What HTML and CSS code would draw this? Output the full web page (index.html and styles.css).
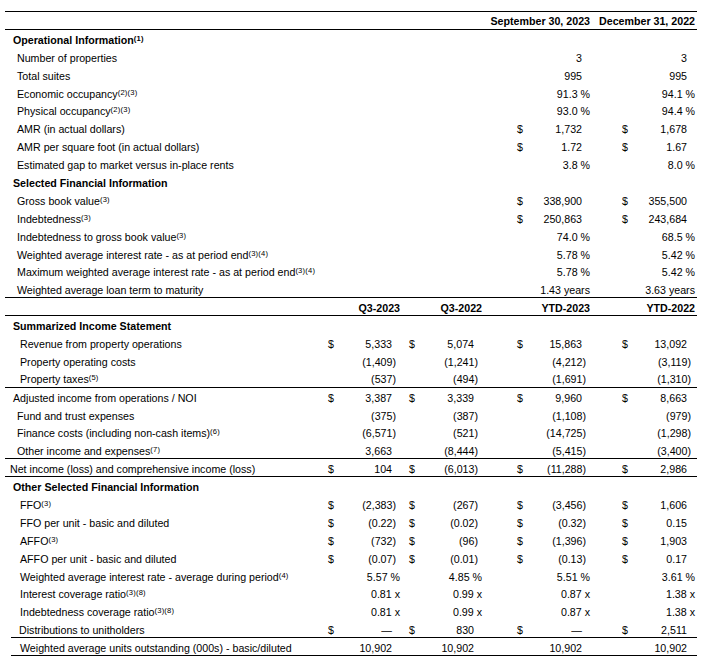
FILE: index.html
```html
<!DOCTYPE html>
<html lang="en">
<head>
<meta charset="utf-8">
<title>Financial Highlights</title>
<link rel="stylesheet" href="styles.css">
</head>
<body>
<div class="sheet">
  <div class="row ul">
    <div class="lbl"></div>
    <div class="v c3 h"><span class="num">September 30, 2023</span></div>
    <div class="v c4 h"><span class="num">December 31, 2022</span></div>
  </div>
  <div class="row"><div class="lbl sec">Operational Information<sup>(1)</sup></div></div>
  <div class="row"><div class="lbl i1">Number of properties</div>
    <div class="v c3"><span class="num pos">3</span></div><div class="v c4"><span class="num pos">3</span></div></div>
  <div class="row"><div class="lbl i1">Total suites</div>
    <div class="v c3"><span class="num pos">995</span></div><div class="v c4"><span class="num pos">995</span></div></div>
  <div class="row"><div class="lbl i1">Economic occupancy<sup>(2)(3)</sup></div>
    <div class="v c3"><span class="num pct">91.3 %</span></div><div class="v c4"><span class="num pct">94.1 %</span></div></div>
  <div class="row"><div class="lbl i1">Physical occupancy<sup>(2)(3)</sup></div>
    <div class="v c3"><span class="num pct">93.0 %</span></div><div class="v c4"><span class="num pct">94.4 %</span></div></div>
  <div class="row"><div class="lbl i1">AMR (in actual dollars)</div>
    <div class="v c3"><span class="cur">$</span><span class="num pos">1,732</span></div><div class="v c4"><span class="cur">$</span><span class="num pos">1,678</span></div></div>
  <div class="row"><div class="lbl i1">AMR per square foot (in actual dollars)</div>
    <div class="v c3"><span class="cur">$</span><span class="num pos">1.72</span></div><div class="v c4"><span class="cur">$</span><span class="num pos">1.67</span></div></div>
  <div class="row"><div class="lbl i1">Estimated gap to market versus in-place rents</div>
    <div class="v c3"><span class="num pct">3.8 %</span></div><div class="v c4"><span class="num pct">8.0 %</span></div></div>
  <div class="row"><div class="lbl sec">Selected Financial Information</div></div>
  <div class="row"><div class="lbl i1">Gross book value<sup>(3)</sup></div>
    <div class="v c3"><span class="cur">$</span><span class="num pos">338,900</span></div><div class="v c4"><span class="cur">$</span><span class="num pos">355,500</span></div></div>
  <div class="row"><div class="lbl i1">Indebtedness<sup>(3)</sup></div>
    <div class="v c3"><span class="cur">$</span><span class="num pos">250,863</span></div><div class="v c4"><span class="cur">$</span><span class="num pos">243,684</span></div></div>
  <div class="row"><div class="lbl i1">Indebtedness to gross book value<sup>(3)</sup></div>
    <div class="v c3"><span class="num pct">74.0 %</span></div><div class="v c4"><span class="num pct">68.5 %</span></div></div>
  <div class="row"><div class="lbl i1">Weighted average interest rate - as at period end<sup>(3)(4)</sup></div>
    <div class="v c3"><span class="num pct">5.78 %</span></div><div class="v c4"><span class="num pct">5.42 %</span></div></div>
  <div class="row"><div class="lbl i1">Maximum weighted average interest rate - as at period end<sup>(3)(4)</sup></div>
    <div class="v c3"><span class="num pct">5.78 %</span></div><div class="v c4"><span class="num pct">5.42 %</span></div></div>
  <div class="row ul"><div class="lbl i1">Weighted average loan term to maturity</div>
    <div class="v c3"><span class="num pct">1.43 years</span></div><div class="v c4"><span class="num pct">3.63 years</span></div></div>

  <div class="row ul"><div class="lbl"></div>
    <div class="v c1 h"><span class="num">Q3-2023</span></div>
    <div class="v c2 h"><span class="num">Q3-2022</span></div>
    <div class="v c3 h"><span class="num">YTD-2023</span></div>
    <div class="v c4 h"><span class="num">YTD-2022</span></div>
  </div>
  <div class="row"><div class="lbl sec">Summarized Income Statement</div></div>
  <div class="row"><div class="lbl i2">Revenue from property operations</div>
    <div class="v c1"><span class="cur">$</span><span class="num pos">5,333</span></div>
    <div class="v c2"><span class="cur">$</span><span class="num pos">5,074</span></div>
    <div class="v c3"><span class="cur">$</span><span class="num pos">15,863</span></div>
    <div class="v c4"><span class="cur">$</span><span class="num pos">13,092</span></div></div>
  <div class="row"><div class="lbl i2">Property operating costs</div>
    <div class="v c1"><span class="num neg">(1,409)</span></div>
    <div class="v c2"><span class="num neg">(1,241)</span></div>
    <div class="v c3"><span class="num neg">(4,212)</span></div>
    <div class="v c4"><span class="num neg">(3,119)</span></div></div>
  <div class="row ul"><div class="lbl i2">Property taxes<sup>(5)</sup></div>
    <div class="v c1"><span class="num neg">(537)</span></div>
    <div class="v c2"><span class="num neg">(494)</span></div>
    <div class="v c3"><span class="num neg">(1,691)</span></div>
    <div class="v c4"><span class="num neg">(1,310)</span></div></div>
  <div class="row"><div class="lbl sub">Adjusted income from operations / NOI</div>
    <div class="v c1"><span class="cur">$</span><span class="num pos">3,387</span></div>
    <div class="v c2"><span class="cur">$</span><span class="num pos">3,339</span></div>
    <div class="v c3"><span class="cur">$</span><span class="num pos">9,960</span></div>
    <div class="v c4"><span class="cur">$</span><span class="num pos">8,663</span></div></div>
  <div class="row"><div class="lbl i3">Fund and trust expenses</div>
    <div class="v c1"><span class="num neg">(375)</span></div>
    <div class="v c2"><span class="num neg">(387)</span></div>
    <div class="v c3"><span class="num neg">(1,108)</span></div>
    <div class="v c4"><span class="num neg">(979)</span></div></div>
  <div class="row"><div class="lbl i3">Finance costs (including non-cash items)<sup>(6)</sup></div>
    <div class="v c1"><span class="num neg">(6,571)</span></div>
    <div class="v c2"><span class="num neg">(521)</span></div>
    <div class="v c3"><span class="num neg">(14,725)</span></div>
    <div class="v c4"><span class="num neg">(1,298)</span></div></div>
  <div class="row ul"><div class="lbl i3">Other income and expenses<sup>(7)</sup></div>
    <div class="v c1"><span class="num pos">3,663</span></div>
    <div class="v c2"><span class="num neg">(8,444)</span></div>
    <div class="v c3"><span class="num neg">(5,415)</span></div>
    <div class="v c4"><span class="num neg">(3,400)</span></div></div>
  <div class="row ul"><div class="lbl tot">Net income (loss) and comprehensive income (loss)</div>
    <div class="v c1"><span class="cur">$</span><span class="num pos">104</span></div>
    <div class="v c2"><span class="cur">$</span><span class="num neg">(6,013)</span></div>
    <div class="v c3"><span class="cur">$</span><span class="num neg">(11,288)</span></div>
    <div class="v c4"><span class="cur">$</span><span class="num pos">2,986</span></div></div>
  <div class="row"><div class="lbl sec">Other Selected Financial Information</div></div>
  <div class="row"><div class="lbl i2">FFO<sup>(3)</sup></div>
    <div class="v c1"><span class="cur">$</span><span class="num neg">(2,383)</span></div>
    <div class="v c2"><span class="cur">$</span><span class="num neg">(267)</span></div>
    <div class="v c3"><span class="cur">$</span><span class="num neg">(3,456)</span></div>
    <div class="v c4"><span class="cur">$</span><span class="num pos">1,606</span></div></div>
  <div class="row"><div class="lbl i2">FFO per unit - basic and diluted</div>
    <div class="v c1"><span class="cur">$</span><span class="num neg">(0.22)</span></div>
    <div class="v c2"><span class="cur">$</span><span class="num neg">(0.02)</span></div>
    <div class="v c3"><span class="cur">$</span><span class="num neg">(0.32)</span></div>
    <div class="v c4"><span class="cur">$</span><span class="num pos">0.15</span></div></div>
  <div class="row"><div class="lbl i2">AFFO<sup>(3)</sup></div>
    <div class="v c1"><span class="cur">$</span><span class="num neg">(732)</span></div>
    <div class="v c2"><span class="cur">$</span><span class="num neg">(96)</span></div>
    <div class="v c3"><span class="cur">$</span><span class="num neg">(1,396)</span></div>
    <div class="v c4"><span class="cur">$</span><span class="num pos">1,903</span></div></div>
  <div class="row"><div class="lbl i2">AFFO per unit - basic and diluted</div>
    <div class="v c1"><span class="cur">$</span><span class="num neg">(0.07)</span></div>
    <div class="v c2"><span class="cur">$</span><span class="num neg">(0.01)</span></div>
    <div class="v c3"><span class="cur">$</span><span class="num neg">(0.13)</span></div>
    <div class="v c4"><span class="cur">$</span><span class="num pos">0.17</span></div></div>
  <div class="row"><div class="lbl i2">Weighted average interest rate - average during period<sup>(4)</sup></div>
    <div class="v c1"><span class="num pct">5.57 %</span></div>
    <div class="v c2"><span class="num pct">4.85 %</span></div>
    <div class="v c3"><span class="num pct">5.51 %</span></div>
    <div class="v c4"><span class="num pct">3.61 %</span></div></div>
  <div class="row"><div class="lbl i2">Interest coverage ratio<sup>(3)(8)</sup></div>
    <div class="v c1"><span class="num pct">0.81 x</span></div>
    <div class="v c2"><span class="num pct">0.99 x</span></div>
    <div class="v c3"><span class="num pct">0.87 x</span></div>
    <div class="v c4"><span class="num pct">1.38 x</span></div></div>
  <div class="row"><div class="lbl i2">Indebtedness coverage ratio<sup>(3)(8)</sup></div>
    <div class="v c1"><span class="num pct">0.81 x</span></div>
    <div class="v c2"><span class="num pct">0.99 x</span></div>
    <div class="v c3"><span class="num pct">0.87 x</span></div>
    <div class="v c4"><span class="num pct">1.38 x</span></div></div>
  <div class="row ul-in"><div class="lbl i4">Distributions to unitholders</div>
    <div class="v c1"><span class="cur">$</span><span class="num pos">—</span></div>
    <div class="v c2"><span class="cur">$</span><span class="num pos">830</span></div>
    <div class="v c3"><span class="cur">$</span><span class="num pos">—</span></div>
    <div class="v c4"><span class="cur">$</span><span class="num pos">2,511</span></div></div>
  <div class="row ul-in"><div class="lbl i2">Weighted average units outstanding (000s) - basic/diluted</div>
    <div class="v c1"><span class="num pos">10,902</span></div>
    <div class="v c2"><span class="num pos">10,902</span></div>
    <div class="v c3"><span class="num pos">10,902</span></div>
    <div class="v c4"><span class="num pos">10,902</span></div></div>
</div>
</body>
</html>
```
FILE: styles.css
```css
* { box-sizing: border-box; }
html, body { margin: 0; padding: 0; background: #fff; }
body {
  font-family: "Liberation Sans", Arial, sans-serif;
  font-size: 10.667px;
  color: #000;
}
.sheet {
  margin: 11px 0 0 5px;
  width: 692px;
  border-top: 1px solid #000;
}
.row {
  display: grid;
  grid-template-columns: 321px 74px 82px 108px 107px;
  height: 17.9px;
  padding-top: 2px;
  align-items: center;
  white-space: nowrap;
}
.ul { border-bottom: 1px solid #000; }
.ul-in {
  background: linear-gradient(#000, #000) no-repeat 6px 100% / calc(100% - 6px) 1px;
}
.lbl { grid-column: 1; }
.sec { padding-left: 8px; font-weight: bold; }
.i1 { padding-left: 12px; }
.i2 { padding-left: 15px; }
.i3 { padding-left: 12px; }
.i4 { padding-left: 14px; }
.sub { padding-left: 8px; }
.tot { padding-left: 5px; }
sup {
  font-size: 7.6px;
  line-height: 0;
  vertical-align: 3.5px;
  letter-spacing: 0.2px;
}
.v { display: flex; align-items: center; }
.c1 { grid-column: 2; padding-left: 2px; }
.c2 { grid-column: 3; padding-left: 9px; }
.c3 { grid-column: 4; padding-left: 35px; }
.c4 { grid-column: 5; padding-left: 32px; padding-right: 2px; }
.h { padding-left: 0; font-weight: bold; }
.num { margin-left: auto; }
.pos { padding-right: 8px; }
.neg { padding-right: 4px; }
.pct { padding-right: 0; }
```
